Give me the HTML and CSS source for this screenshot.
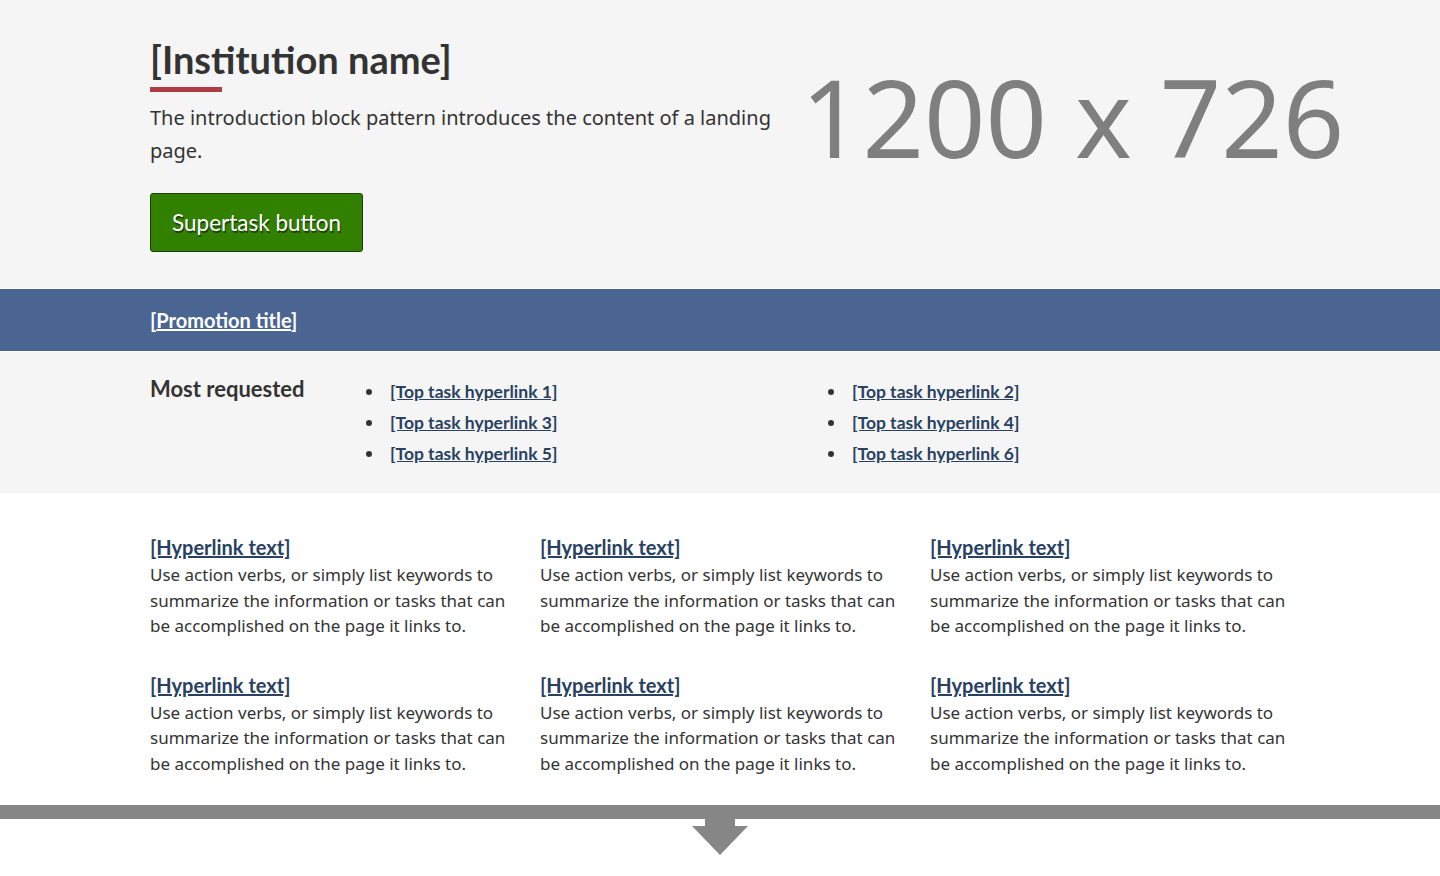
FILE: index.html
```html
<!DOCTYPE html>
<html lang="en">
<head>
<meta charset="utf-8">
<title>Landing page</title>
<link rel="stylesheet" href="styles.css">
</head>
<body>
<section class="intro">
  <div class="container intro-row">
    <div class="intro-text">
      <h1 class="title">[Institution name]</h1>
      <p class="lead">The introduction block pattern introduces the content of a landing page.</p>
      <a class="btn-cta" href="#">Supertask button</a>
    </div>
    <div class="intro-img">
      <span class="placeholder">1200 x 726</span>
    </div>
  </div>
</section>
<section class="promo">
  <div class="container">
    <span class="promo-title">[<a href="#">Promotion title</a>]</span>
  </div>
</section>
<section class="requested">
  <div class="container req-row">
    <h2 class="req-title">Most requested</h2>
    <ul class="req-list">
      <li><a href="#">[Top task hyperlink 1]</a></li>
      <li><a href="#">[Top task hyperlink 2]</a></li>
      <li><a href="#">[Top task hyperlink 3]</a></li>
      <li><a href="#">[Top task hyperlink 4]</a></li>
      <li><a href="#">[Top task hyperlink 5]</a></li>
      <li><a href="#">[Top task hyperlink 6]</a></li>
    </ul>
  </div>
</section>
<section class="cards">
  <div class="container card-grid">
    <div class="card"><a class="card-link" href="#">[Hyperlink text]</a><p>Use action verbs, or simply list keywords to summarize the information or tasks that can be accomplished on the page it links to.</p></div>
    <div class="card"><a class="card-link" href="#">[Hyperlink text]</a><p>Use action verbs, or simply list keywords to summarize the information or tasks that can be accomplished on the page it links to.</p></div>
    <div class="card"><a class="card-link" href="#">[Hyperlink text]</a><p>Use action verbs, or simply list keywords to summarize the information or tasks that can be accomplished on the page it links to.</p></div>
    <div class="card"><a class="card-link" href="#">[Hyperlink text]</a><p>Use action verbs, or simply list keywords to summarize the information or tasks that can be accomplished on the page it links to.</p></div>
    <div class="card"><a class="card-link" href="#">[Hyperlink text]</a><p>Use action verbs, or simply list keywords to summarize the information or tasks that can be accomplished on the page it links to.</p></div>
    <div class="card"><a class="card-link" href="#">[Hyperlink text]</a><p>Use action verbs, or simply list keywords to summarize the information or tasks that can be accomplished on the page it links to.</p></div>
  </div>
</section>
<div class="more">
  <div class="more-bar"></div>
  <svg class="more-arrow" width="56" height="37" viewBox="0 0 56 37" aria-hidden="true">
    <rect x="13" y="0" width="30" height="9" fill="#868686"/>
    <polygon points="0,8 56,8 28,37" fill="#868686"/>
  </svg>
</div>
</body>
</html>
```

FILE: styles.css
```css
* { box-sizing: border-box; }
html, body { margin: 0; padding: 0; }
body {
  font-family: "Noto Sans", "DejaVu Sans", sans-serif;
  color: #333;
  background: #fff;
}
.container {
  width: 1140px;
  margin: 0 auto;
}
a { color: #284162; }

/* Intro */
.intro {
  background: #f5f5f5;
  padding: 36px 0 36px;
  border-bottom: 1px solid #fff;
}
.intro-row {
  display: flex;
  align-items: flex-start;
}
.intro-text {
  width: 637px;
  flex: none;
}
.title {
  font-family: "Lato", sans-serif;
  font-weight: 700;
  font-size: 38px;
  line-height: 46px;
  margin: 0;
  color: #333;
}
.title::after {
  content: "";
  display: block;
  width: 72px;
  height: 5px;
  background: #af3c43;
  margin-top: 5px;
}
.lead {
  font-size: 20px;
  line-height: 33px;
  margin: 9px 0 26px;
}
.btn-cta {
  display: inline-block;
  font-family: "Lato", sans-serif;
  font-size: 22.5px;
  line-height: 25px;
  color: #fff;
  text-decoration: none;
  background: #318000;
  border: 1px solid #1b3f0c;
  border-radius: 3px;
  padding: 16px 21px 16px 21px;
  text-shadow: 1px 2px 0 #1e3f0f;
}
.intro-img {
  flex: 1;
  display: flex;
  justify-content: flex-start;
  padding-top: 12px;
}
.placeholder {
  font-family: "Noto Sans", sans-serif;
  font-size: 107.5px;
  line-height: 136px;
  color: #7f7f7f;
  margin-left: 14px;
  white-space: nowrap;
}

/* Promo */
.promo {
  background: #4a6591;
  height: 63px;
  display: flex;
  align-items: center;
  border-bottom: 1px solid #fff;
}
.promo-title {
  font-family: "Lato", sans-serif;
  font-weight: 700;
  font-size: 20px;
  color: #fff;
  padding-top: 2px;
}
.promo-title a { color: #fff; }

/* Most requested */
.requested {
  background: #f5f5f5;
  padding: 22px 0 24px;
}
.req-row {
  display: flex;
  align-items: flex-start;
}
.req-title {
  font-family: "Lato", sans-serif;
  font-weight: 700;
  font-size: 22px;
  line-height: 30px;
  margin: 0;
  width: 240px;
  flex: none;
}
.req-list {
  list-style: none;
  margin: 2px 0 0;
  padding: 0;
  display: grid;
  grid-template-columns: 462px 400px;
  font-family: "Lato", sans-serif;
  font-size: 17.5px;
  line-height: 31px;
}
.req-list li::before {
  content: "";
  display: inline-block;
  width: 6px;
  height: 6px;
  border-radius: 50%;
  background: #333;
  margin: 0 18px 3px -24px;
  vertical-align: middle;
}
.req-list a {
  color: #284162;
  font-weight: 700;
}

/* Cards */
.cards {
  padding: 40px 0 24px;
}
.card-grid {
  display: grid;
  grid-template-columns: repeat(3, 360px);
  column-gap: 30px;
  row-gap: 27px;
}
.card-link {
  font-family: "Lato", sans-serif;
  font-weight: 700;
  font-size: 20px;
  line-height: 29px;
  color: #284162;
}
.card p {
  font-size: 17px;
  line-height: 25.5px;
  margin: 0 0 5px;
}

/* More arrow */
.more {
  display: flex;
  flex-direction: column;
  align-items: center;
}
.more-bar {
  width: 100%;
  height: 14px;
  background: #868686;
}
.more-arrow {
  display: block;
  margin-top: -1px;
}
```
